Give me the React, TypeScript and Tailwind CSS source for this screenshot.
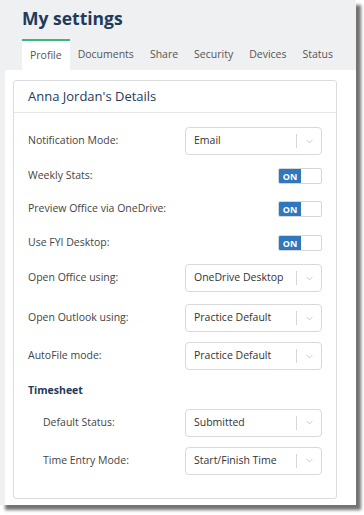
import { ChevronDown } from "lucide-react";

const font = { fontFamily: '"Open Sans", "Noto Sans", sans-serif' };

function Select({ value }: { value: string }) {
  return (
    <div className="flex h-[28px] w-[137px] items-center rounded-[4px] border border-[#d9d9d9] bg-white pl-[8px]">
      <span className="flex-1 text-[10.5px] text-[#333]">{value}</span>
      <span className="h-[14px] w-px bg-[#d6d6d6]" />
      <span className="flex w-[24px] justify-center">
        <ChevronDown size={11} strokeWidth={1.5} className="text-[#b5b5b5]" />
      </span>
    </div>
  );
}

function Toggle() {
  return (
    <div className="flex h-[16px] w-[44px] overflow-hidden rounded-[2px] border border-[#d6d6d6] bg-white">
      <span className="flex w-[22px] items-center justify-center bg-[#2f78bd] text-[9px] font-bold leading-none text-white">
        ON
      </span>
    </div>
  );
}

function Row({
  label,
  children,
  indent,
  h,
}: {
  label: string;
  children: React.ReactNode;
  indent?: boolean;
  h: string;
}) {
  return (
    <div className={`flex items-center justify-between ${h}`}>
      <span className={`text-[10.5px] text-[#444] ${indent ? "pl-[15px]" : ""}`}>{label}</span>
      {children}
    </div>
  );
}

export default function App() {
  const tabs = ["Profile", "Documents", "Share", "Security", "Devices", "Status"];
  return (
    <div className="h-[515px] w-[364px] bg-white" style={font}>
      <div className="h-[505px] w-[356px] bg-[#eef0f2] shadow-[5px_5px_3px_rgba(0,0,0,0.55)]">
        <h1 className="pl-[22px] pt-[5px] text-[17.5px] font-bold leading-[26px] text-[#1f3a5a]">My settings</h1>
        <div className="mt-[8px] flex pl-[22px]">
          {tabs.map((t, i) => (
            <div
              key={t}
              className={`flex h-[31px] items-center px-[8px] text-[10.5px] text-[#555] ${
                i === 0 ? "border-t-2 border-[#3cb878] bg-white" : ""
              }`}
            >
              {t}
            </div>
          ))}
        </div>
        <div className="ml-[5px] h-[435px] w-[351px] bg-white pl-[8px] pt-[10px]">
          <div className="h-[419px] w-[324px] rounded-[3px] border border-[#dcdcdc]">
            <div className="flex h-[32px] items-center border-b border-[#e6e6e6] pl-[14px] text-[13px] text-[#1f3a5a]">
              Anna Jordan's Details
            </div>
            <div className="pl-[14px] pr-[14px] pt-[14px]">
              <Row label="Notification Mode:" h="h-[28px]">
                <Select value="Email" />
              </Row>
              <div className="h-[13px]" />
              <Row label="Weekly Stats:" h="h-[16px]">
                <Toggle />
              </Row>
              <div className="h-[17px]" />
              <Row label="Preview Office via OneDrive:" h="h-[16px]">
                <Toggle />
              </Row>
              <div className="h-[18px]" />
              <Row label="Use FYI Desktop:" h="h-[16px]">
                <Toggle />
              </Row>
              <div className="h-[13px]" />
              <Row label="Open Office using:" h="h-[28px]">
                <Select value="OneDrive Desktop" />
              </Row>
              <div className="h-[12px]" />
              <Row label="Open Outlook using:" h="h-[28px]">
                <Select value="Practice Default" />
              </Row>
              <div className="h-[10px]" />
              <Row label="AutoFile mode:" h="h-[28px]">
                <Select value="Practice Default" />
              </Row>
              <div className="mt-[13px] text-[10.5px] font-bold text-[#1f3a5a]">Timesheet</div>
              <div className="h-[10px]" />
              <Row label="Default Status:" indent h="h-[28px]">
                <Select value="Submitted" />
              </Row>
              <div className="h-[10px]" />
              <Row label="Time Entry Mode:" indent h="h-[28px]">
                <Select value="Start/Finish Time" />
              </Row>
            </div>
          </div>
        </div>
      </div>
    </div>
  );
}
